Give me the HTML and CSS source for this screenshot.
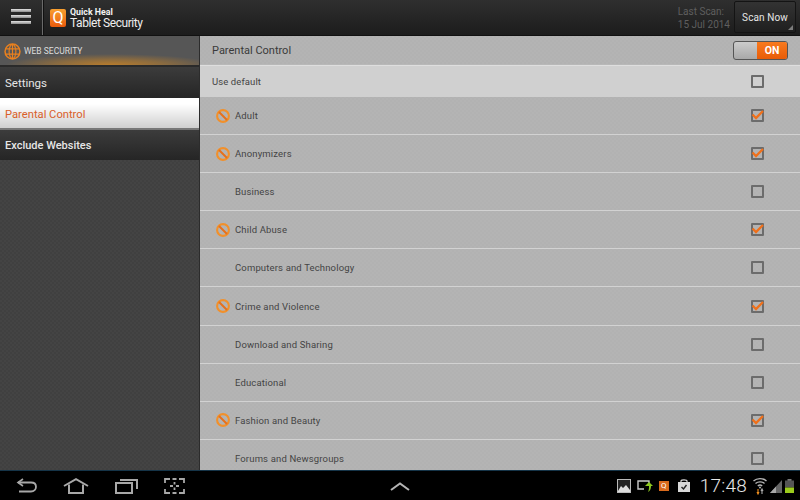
FILE: index.html
```html
<!DOCTYPE html>
<html lang="en">
<head>
<meta charset="utf-8">
<title>Quick Heal Tablet Security</title>
<link rel="stylesheet" href="styles.css">
</head>
<body>
<svg class="defs" width="0" height="0" aria-hidden="true">
  <symbol id="ban" viewBox="0 0 14 14">
    <circle cx="7" cy="7" r="5.9" fill="none" stroke="#f2902a" stroke-width="2.1"/>
    <path d="M3 3 L11 11" stroke="#e8701a" stroke-width="2"/>
  </symbol>
  <symbol id="check" viewBox="0 0 14 14">
    <path d="M1.5 5.5 L5 9 L12 2" fill="none" stroke="#f0701a" stroke-width="2.3"/>
  </symbol>
</svg>
<div class="app">
  <header class="top">
    <button class="menu"><span></span><span></span><span></span></button>
    <div class="brand">
      <div class="logo">Q</div>
      <div class="brand-text"><b>Quick Heal</b><span>Tablet Security</span></div>
    </div>
    <div class="scan-info"><span>Last Scan:</span><span>15 Jul 2014</span></div>
    <div class="scan-btn">Scan Now</div>
  </header>
  <main class="main">
    <aside class="side">
      <div class="side-head">
        <svg class="globe" width="17" height="17" viewBox="0 0 18 18" fill="none" stroke="#e8801f" stroke-width="1.2">
          <circle cx="9" cy="9" r="7.9" stroke-width="1.6"/>
          <ellipse cx="9" cy="9" rx="3.6" ry="7.6"/>
          <path d="M1.6 6.2H16.4M1.6 11.8H16.4M9 1.4V16.6"/>
        </svg>
        <span>WEB SECURITY</span>
      </div>
      <div class="side-item s1">Settings</div>
      <div class="side-item active">Parental Control</div>
      <div class="side-item s3">Exclude Websites</div>
    </aside>
    <section class="content">
      <div class="head">
        <span>Parental Control</span>
        <div class="toggle"><i></i><b>ON</b></div>
      </div>
      <div class="default"><span>Use default</span><div class="box"></div></div>
      <div class="row"><svg class="ban"><use href="#ban"/></svg><span class="lbl">Adult</span><div class="box"><svg class="tick"><use href="#check"/></svg></div></div>
      <div class="row"><svg class="ban"><use href="#ban"/></svg><span class="lbl">Anonymizers</span><div class="box"><svg class="tick"><use href="#check"/></svg></div></div>
      <div class="row"><span class="lbl plain">Business</span><div class="box"></div></div>
      <div class="row"><svg class="ban"><use href="#ban"/></svg><span class="lbl">Child Abuse</span><div class="box"><svg class="tick"><use href="#check"/></svg></div></div>
      <div class="row"><span class="lbl plain">Computers and Technology</span><div class="box"></div></div>
      <div class="row"><svg class="ban"><use href="#ban"/></svg><span class="lbl">Crime and Violence</span><div class="box"><svg class="tick"><use href="#check"/></svg></div></div>
      <div class="row"><span class="lbl plain">Download and Sharing</span><div class="box"></div></div>
      <div class="row"><span class="lbl plain">Educational</span><div class="box"></div></div>
      <div class="row"><svg class="ban"><use href="#ban"/></svg><span class="lbl">Fashion and Beauty</span><div class="box"><svg class="tick"><use href="#check"/></svg></div></div>
      <div class="row"><span class="lbl plain">Forums and Newsgroups</span><div class="box"></div></div>
    </section>
  </main>
  <footer class="nav">
    <div class="nav-left">
      <svg width="21" height="16" viewBox="0 0 21 16" fill="none" stroke="#a8a8a8" stroke-width="1.8"><path d="M2 4.5H15C18 4.5 20 6.3 20 8.8C20 11.3 18 13.5 15 13.5H3"/><path d="M7 1L2 4.5L7 8" stroke-width="1.6"/></svg>
      <svg width="26" height="16" viewBox="0 0 26 16" fill="none" stroke="#a8a8a8" stroke-width="2"><path d="M1 8L13 1.2L25 8"/><path d="M6 6.5V15H20V6.5"/></svg>
      <svg width="23" height="16" viewBox="0 0 23 16" fill="none" stroke="#a8a8a8" stroke-width="2"><rect x="1" y="5" width="16" height="10"/><path d="M5 2H22V11"/></svg>
      <svg width="21" height="16" viewBox="0 0 21 16" fill="none" stroke="#a8a8a8" stroke-width="1.8"><path d="M1 5V1H6M15 1H20V5M20 11V15H15M6 15H1V11M8.500 1H12.500M8.500 15H12.500M10.500 4V6.500M10.500 9.500V12M6 8H9M12 8H15"/></svg>
    </div>
    <svg class="chev" width="20" height="9" viewBox="0 0 20 9" fill="none" stroke="#b4b4b4" stroke-width="2"><path d="M1 8L10 1.500L19 8"/></svg>
    <div class="tray">
      <svg width="14" height="14" viewBox="0 0 14 14"><rect x="0.500" y="0.500" width="13" height="13" fill="#222" stroke="#bbb"/><path d="M1 12L4 7L6 9L9 6L13 11V13H1Z" fill="#ddd"/></svg>
      <svg width="16" height="14" viewBox="0 0 16 14" fill="none"><path d="M7 10H1V2H12V5" stroke="#ccc" stroke-width="1.400"/><path d="M12 3L16 7H14C14 10 13 12 11 13C12 11 12 9 12 7H8Z" fill="#8cc820"/></svg>
      <div class="q-mini">Q</div>
      <svg width="14" height="14" viewBox="0 0 14 14"><path d="M1 3H13V13H1Z" fill="#d8d8d8"/><path d="M4 4V2C4 0.500 10 0.500 10 2V4" fill="none" stroke="#d8d8d8" stroke-width="1.200"/><path d="M4.500 8L6.500 10L9.500 6" fill="none" stroke="#222" stroke-width="1.400"/></svg>
      <span class="clock">17:48</span>
      <svg class="wifi" width="14" height="18" viewBox="0 0 14 18" fill="none" stroke="#b8b8b8" stroke-width="1.400"><path d="M0.500 4C4 0.800 10 0.800 13.500 4M2.500 6.500C5 4.300 9 4.300 11.500 6.500M4.800 9C6 8 8 8 9.200 9"/><circle cx="7" cy="10.500" r="1" fill="#b8b8b8" stroke="none"/><path d="M5 12V17M4 15L5 17L6 15" stroke="#f09020" stroke-width="1.100"/><path d="M9 17V12M8 14L9 12L10 14" stroke="#aaa" stroke-width="1.100"/></svg>
      <svg class="tight" width="12" height="14" viewBox="0 0 12 14"><path d="M0 14L12 1V14Z" fill="#666"/><path d="M0 14L6 7.500V14Z" fill="#a8a8a8"/></svg>
      <svg class="tight" width="9" height="14" viewBox="0 0 9 14"><rect x="2.500" y="0" width="4" height="2" fill="#777"/><rect x="0" y="1.500" width="9" height="7" fill="#555"/><rect x="0" y="8.500" width="9" height="5.500" fill="#9ccc1c"/></svg>
    </div>
  </footer>
</div>
</body>
</html>
```
FILE: styles.css
```css
* { box-sizing: border-box; }
html, body { margin: 0; padding: 0; }
body { font-family: Roboto, "Liberation Sans", sans-serif; }
.defs { display: block; height: 0; }
.app { width: 800px; height: 500px; display: flex; flex-direction: column; overflow: hidden; background: #000; }

.top { height: 35px; flex: none; display: flex; align-items: center; background: linear-gradient(#2f2f2f, #1c1c1c); }
.menu { width: 43px; height: 35px; padding: 0 0 2px; border: 0; border-right: 1px solid #6a6a6a; background: none; display: flex; flex-direction: column; align-items: center; justify-content: center; gap: 3px; box-shadow: 1px 0 0 #111; }
.menu span { display: block; width: 20px; height: 3px; background: linear-gradient(#e4e4e4, #8c8c8c); }
.brand { display: flex; align-items: center; gap: 4px; margin-left: 7px; }
.logo { width: 16px; height: 18px; border-radius: 2px; background: linear-gradient(#f8a030, #ea5a0c); color: #fff; font-size: 16px; font-weight: 400; line-height: 18px; text-align: center; }
.brand-text { display: flex; flex-direction: column; color: #eee; padding-top: 2px; }
.brand-text b { font-size: 8.800px; line-height: 9px; font-weight: 700; color: #f2f2f2; }
.brand-text span { font-size: 12px; line-height: 12px; letter-spacing: -.42px; }
.scan-info { margin-left: auto; display: flex; flex-direction: column; align-items: flex-end; gap: 1px; color: #5f5f5f; font-size: 10px; line-height: 12px; padding-right: 3px; padding-top: 1px; }
.scan-info span:first-child { padding-right: 6px; }
.scan-btn { position: relative; width: 62px; height: 32px; margin: 0 4px 1px 1px; background: linear-gradient(#333, #1f1f1f); border: 1px solid #141414; border-radius: 2px; color: #e6e6e6; font-size: 10px; letter-spacing: .1px; line-height: 31px; text-align: center; }
.scan-btn::after { content: ""; position: absolute; right: 2px; bottom: 2px; border-style: solid; border-width: 0 0 5px 5px; border-color: transparent transparent #7c7c7c transparent; }

.main { flex: 1; min-height: 0; display: flex; border-top: 1px solid #111; }
.side { width: 199px; flex: none; background-color: #444; background-image: linear-gradient(45deg, #404040 25%, transparent 25%, transparent 75%, #404040 75%), linear-gradient(45deg, #404040 25%, transparent 25%, transparent 75%, #404040 75%); background-size: 4px 4px; background-position: 0 0, 2px 2px; }
.side-head { height: 31px; display: flex; align-items: center; gap: 3px; padding: 1px 0 0 4px; color: #ddd; font-size: 8.500px; border-bottom: 2px solid #2a2a2a; background: radial-gradient(ellipse 105px 11px at 110px 100%, #b87c2c 0%, rgba(176,122,48,.6) 50%, rgba(90,80,60,0) 100%), #565656; }
.side-item { display: flex; align-items: center; padding-left: 5px; color: #e6e6e6; font-size: 11.500px; background: linear-gradient(#3c3c3c, #252525); }
.side-item.s1 { height: 31px; }
.side-item.active { height: 32px; padding-top: 3px; font-size: 11.200px; color: #d9602a; background: linear-gradient(#fff 20%, #cfcfcf); border-bottom: 2px solid #777; }
.side-item.s3 { height: 30px; font-size: 11px; font-weight: 500; }

.content { flex: 1; min-width: 0; overflow: hidden; background-color: #b4b4b4; background-image: linear-gradient(45deg, #b2b2b2 25%, transparent 25%, transparent 75%, #b2b2b2 75%), linear-gradient(45deg, #b2b2b2 25%, transparent 25%, transparent 75%, #b2b2b2 75%); background-size: 4px 4px; background-position: 0 0, 2px 2px; color: #444; border-left: 1px solid #2c2c2c; }
.head { height: 29px; display: flex; align-items: center; justify-content: space-between; padding: 0 12px; font-size: 11px; color: #3a3a3a; border-bottom: 1px solid #b8b8b8; }
.toggle { width: 55px; height: 19px; display: flex; border: 1px solid #555; border-radius: 3px; overflow: hidden; background: linear-gradient(#ccc, #a8a8a8); }
.toggle i { flex: 1; }
.toggle b { width: 30px; background: linear-gradient(#f87a1e, #e85c08); color: #fff; font-size: 10.500px; font-weight: 700; line-height: 17px; text-align: center; }
.default { height: 32px; display: flex; align-items: center; justify-content: space-between; padding: 0 36px 1px 12px; background: #d0d0d0; border-top: 1px solid #dedede; font-size: 9.500px; letter-spacing: .1px; }
.row { height: 38.100px; display: flex; align-items: center; padding: 0 36px 0 16px; font-size: 9.500px; letter-spacing: .15px; border-bottom: 1px solid #d2d2d2; }
.ban { width: 14px; height: 14px; flex: none; }
.lbl { margin-left: 5px; flex: 1; }
.lbl.plain { margin-left: 19px; }
.box { position: relative; width: 13px; height: 13px; flex: none; border: 2px solid #6c6c6c; border-radius: 1px; }
.tick { position: absolute; left: -2px; top: -2px; width: 14px; height: 14px; overflow: visible; }

.nav { height: 30px; flex: none; position: relative; display: flex; align-items: center; justify-content: space-between; background: #000; border-top: 1px solid #153448; }
.nav-left { display: flex; align-items: center; gap: 26px; padding-left: 16px; }
.chev { position: absolute; left: 390px; top: 11px; }
.tray { display: flex; align-items: center; gap: 6px; padding-right: 6px; }
.q-mini { width: 10px; height: 10px; background: #d96a1c; color: #fff; font-size: 8px; line-height: 10px; text-align: center; margin-right: 2px; }
.clock { color: #e8e8e8; font-size: 19px; font-weight: 300; letter-spacing: .2px; margin-left: 3px; }
.wifi { margin-right: -3px; }
.tray .tight + .tight { margin-left: -3px; }
```
